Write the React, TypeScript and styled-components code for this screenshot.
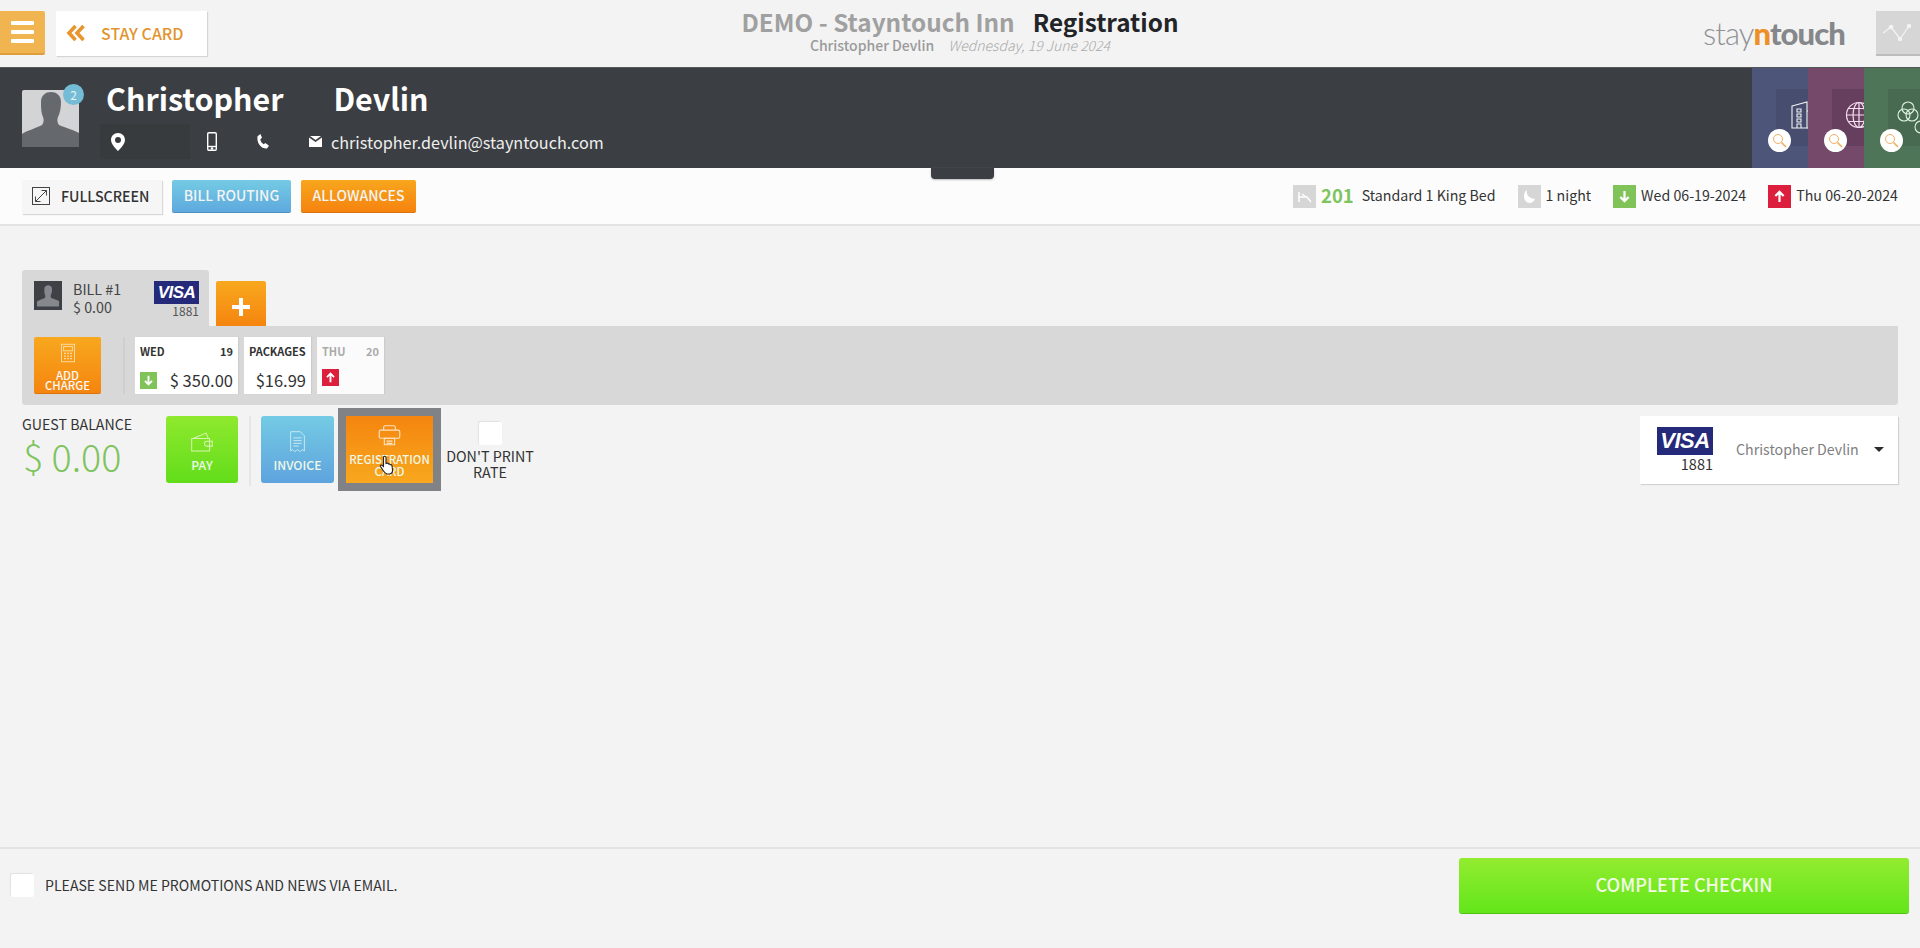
import styled, { createGlobalStyle } from "styled-components";

const GlobalStyle = createGlobalStyle`
  * { box-sizing: border-box; }
  html, body { margin: 0; padding: 0; height: 100%; }
  body {
    background: #f3f3f3;
    font-family: "Noto Sans CJK SC", "Open Sans", sans-serif;
    color: #333;
  }
`;

const Page = styled.div`
  height: 948px;
  display: flex;
  flex-direction: column;
  overflow: hidden;
`;

/* top header */
const Header = styled.header`
  height: 67px;
  flex-shrink: 0;
  display: grid;
  grid-template-columns: 1fr auto 1fr;
  align-items: start;
`;

const HeaderLeft = styled.div`
  display: flex;
  gap: 11px;
  padding-top: 11px;
`;

const MenuButton = styled.button`
  width: 45px;
  height: 44px;
  border: 0;
  padding: 0;
  background: #f0b551;
  border-bottom: 2px solid #dc9e3a;
  border-radius: 0 2px 2px 0;
  display: flex;
  flex-direction: column;
  gap: 5px;
  align-items: center;
  justify-content: center;
`;

const MenuLine = styled.span`
  width: 23px;
  height: 4px;
  background: #fff;
  border-radius: 1px;
`;

const BackButton = styled.button`
  width: 151px;
  height: 45px;
  border: 0;
  padding: 0 0 2px 10px;
  background: #fff;
  box-shadow: 1px 1px 1px #d5d5d5;
  color: #e2942f;
  display: flex;
  align-items: center;
  gap: 15px;
  font: 500 16px "Noto Sans CJK SC", sans-serif;
`;

const TitleBlock = styled.div`
  padding-top: 5px;
  text-align: center;
`;

const TitleRow = styled.div`
  display: flex;
  gap: 18px;
  font-size: 24.3px;
  line-height: 34px;
  font-weight: 700;
`;

const Hotel = styled.span`
  color: #a0a0a0;
`;

const PageName = styled.span`
  color: #222427;
`;

const SubRow = styled.div`
  display: flex;
  justify-content: center;
  gap: 14px;
  font-size: 14px;
  line-height: 14px;
  margin-top: -1px;
`;

const SubName = styled.span`
  color: #9a9a9a;
  font-weight: 500;
`;

const SubDate = styled.span`
  color: #aaa;
  font-style: italic;
  font-weight: 300;
`;

const HeaderRight = styled.div`
  display: flex;
  justify-content: flex-end;
  padding-top: 11px;
  gap: 31px;
`;

const Logo = styled.div`
  font-size: 31px;
  line-height: 44px;
  letter-spacing: -0.9px;
  color: #8f9194;
  font-weight: 300;
  font-family: "Lato", sans-serif;
`;

const LogoBold = styled.b<{ $orange?: boolean }>`
  font-weight: 900;
  color: ${(p) => (p.$orange ? "#ee8f25" : "#85878a")};
`;

const ChartButton = styled.button`
  width: 44px;
  height: 45px;
  border: 0;
  padding: 0 0 0 6px;
  background: #d6d6d6;
  border-bottom: 2px solid #bdbdbd;
  display: flex;
  align-items: center;
`;

/* dark guest bar */
const GuestBar = styled.section`
  height: 101px;
  flex-shrink: 0;
  background: #3b3e42;
  display: flex;
  border-top: 1px solid #55585b;
`;

const GuestInfo = styled.div`
  flex: 1;
  display: flex;
  padding: 22px 0 0 22px;
  gap: 27px;
`;

const AvatarBox = styled.div`
  position: relative;
  width: 57px;
  height: 57px;
  background: #d3d4d6;
  border-radius: 2px;
  overflow: visible;
`;

const Badge = styled.span`
  position: absolute;
  top: -6px;
  right: -5px;
  width: 21px;
  height: 21px;
  border-radius: 50%;
  background: #74bcd5;
  color: #e6f4f8;
  font-size: 12px;
  line-height: 21px;
  text-align: center;
`;

const GuestText = styled.div`
  display: flex;
  flex-direction: column;
  margin-top: -11px;
`;

const GuestName = styled.h1`
  margin: 0;
  display: flex;
  gap: 50px;
  color: #fff;
  font-size: 30.4px;
  line-height: 38px;
  font-weight: 700;
`;

const ContactRow = styled.div`
  display: flex;
  align-items: center;
  margin: 7px 0 0 -6px;
  height: 35px;
`;

const AddressBox = styled.div`
  width: 90px;
  height: 35px;
  background: #383b3e;
  display: flex;
  align-items: center;
  padding-left: 11px;
`;

const ContactIcon = styled.span<{ $width: number; $after?: number }>`
  width: ${(p) => p.$width}px;
  margin-right: ${(p) => p.$after ?? 0}px;
  display: flex;
  justify-content: center;
`;

const Email = styled.span`
  color: #eee;
  font-size: 16.2px;
`;

const Panel = styled.div<{ $bg: string; $inner: string }>`
  position: relative;
  width: 56px;
  background: ${(p) => p.$bg};
  padding: 21px 0 0 24px;
  overflow: hidden;
  & > div {
    background: ${(p) => p.$inner};
  }
`;

const PanelInner = styled.div<{ $left?: number }>`
  width: 60px;
  height: 57px;
  padding: 12px 0 0 ${(p) => p.$left ?? 15}px;
`;

const SearchDot = styled.span`
  position: absolute;
  left: 16px;
  top: 61px;
  width: 23px;
  height: 23px;
  border-radius: 50%;
  background: #fff;
  display: flex;
  align-items: center;
  justify-content: center;
`;

/* actions strip */
const ActionBar = styled.section`
  position: relative;
  height: 58px;
  flex-shrink: 0;
  background: #fcfcfc;
  border-bottom: 2px solid #e4e4e4;
  padding: 12px 22px 0;
  display: flex;
  justify-content: space-between;
`;

const Handle = styled.div`
  position: absolute;
  left: 931px;
  top: 0;
  width: 63px;
  height: 11px;
  background: #3b3e42;
  border-radius: 0 0 4px 4px;
  box-shadow: 0 1px 2px #bbb;
`;

const ActionGroup = styled.div`
  display: flex;
  gap: 10px;
  align-items: flex-start;
`;

const FullscreenButton = styled.button`
  width: 140px;
  height: 34px;
  border: 0;
  padding: 0 0 2px 10px;
  background: #f6f6f6;
  box-shadow: 1px 1px 1px #d8d8d8;
  display: flex;
  align-items: center;
  gap: 11px;
  color: #333;
  font: 500 14.2px "Noto Sans CJK SC", sans-serif;
`;

const PillButton = styled.button<{ $tone: "blue" | "orange" }>`
  height: 33px;
  padding: 0 0 2px;
  width: ${(p) => (p.$tone === "blue" ? 119 : 115)}px;
  border: 0;
  border-radius: 2px;
  color: #f4f4f4;
  font: 500 14px "Noto Sans CJK SC", sans-serif;
  background: ${(p) =>
    p.$tone === "blue"
      ? "linear-gradient(#74cbe4, #5ea9de)"
      : "linear-gradient(#f8a61d, #f5830f)"};
  border-bottom: 1px solid ${(p) => (p.$tone === "blue" ? "#4f90c0" : "#d9730c")};
`;

const StayInfo = styled.div`
  display: flex;
  align-items: flex-start;
  padding: 5px 0 0;
  font-size: 14.2px;
  line-height: 20px;
  color: #333;
`;

const StatIcon = styled.span<{ $bg: string; $gap: number }>`
  width: 23px;
  height: 23px;
  margin-left: ${(p) => p.$gap}px;
  margin-right: 5px;
  background: ${(p) => p.$bg};
  display: flex;
  align-items: center;
  justify-content: center;
`;

const RoomNumber = styled.span`
  color: #7ec45e;
  font-size: 18.500px;
  font-weight: 700;
  margin-right: 8px;
`;

/* bill area */
const Main = styled.main`
  flex: 1;
  padding: 44px 22px 0;
`;

const TabRow = styled.div`
  display: flex;
  align-items: flex-end;
  gap: 7px;
`;

const BillTab = styled.div`
  width: 187px;
  height: 56px;
  background: #d8d8d8;
  border-radius: 3px 3px 0 0;
  padding: 11px 10px 0 12px;
  display: flex;
`;

const ThumbBox = styled.div`
  width: 28px;
  height: 29px;
  background: #3e4145;
  padding: 3px;
  margin-right: 11px;
`;

const BillText = styled.div`
  flex: 1;
  font-size: 14.3px;
  line-height: 18px;
  margin-top: -1px;
  color: #444;
`;

const CardMark = styled.div<{ $large?: boolean }>`
  width: ${(p) => (p.$large ? 56 : 45)}px;
  flex-shrink: 0;
  text-align: right;
  font-size: ${(p) => (p.$large ? 14.5 : 12)}px;
  line-height: ${(p) => (p.$large ? 18 : 14)}px;
  color: ${(p) => (p.$large ? "#333" : "#555")};
`;

const VisaLabel = styled.div<{ $large?: boolean }>`
  height: ${(p) => (p.$large ? 28 : 23)}px;
  background: #25297a;
  color: #fff;
  text-align: center;
  font-family: "Liberation Sans", sans-serif;
  font-style: italic;
  font-weight: 700;
  font-size: ${(p) => (p.$large ? 22 : 17)}px;
  line-height: ${(p) => (p.$large ? 28 : 23)}px;
  letter-spacing: -0.5px;
`;

const AddTabButton = styled.button`
  width: 50px;
  height: 45px;
  border: 0;
  padding: 7px 0 0;
  background: linear-gradient(#f8a81e, #f5850f);
  border-radius: 2px 2px 0 0;
  color: #fff;
  display: flex;
  align-items: center;
  justify-content: center;
`;

const ChargeBar = styled.div`
  height: 79px;
  background: #d8d8d8;
  border-radius: 0 0 3px 3px;
  padding: 11px 12px 0;
  display: flex;
  gap: 6px;
`;

const AddChargeButton = styled.button`
  width: 67px;
  height: 57px;
  border: 0;
  padding: 6px 0 0;
  border-radius: 2px;
  background: linear-gradient(#f8a81e, #f5850f);
  border-bottom: 1px solid #d9730c;
  color: #f8f8f8;
  font: 500 11.4px/10px "Noto Sans CJK SC", sans-serif;
  display: flex;
  flex-direction: column;
  align-items: center;
  gap: 7px;
`;

const VDivider = styled.div<{ $margin: string; $height: number; $color: string }>`
  width: 2px;
  height: ${(p) => p.$height}px;
  background: ${(p) => p.$color};
  margin: ${(p) => p.$margin};
`;

const DayCard = styled.div<{ $width: number; $muted?: boolean }>`
  width: ${(p) => p.$width}px;
  height: 57px;
  background: ${(p) => (p.$muted ? "#fbfbfb" : "#fff")};
  box-shadow: 1px 0 1px #ccc;
  padding: 5px 5px 0;
  color: ${(p) => (p.$muted ? "#aaa" : "#333")};
`;

const DayTop = styled.div`
  display: flex;
  justify-content: space-between;
  font-size: 11px;
  line-height: 18px;
  font-weight: 700;
`;

const DayBottom = styled.div`
  margin-top: 9px;
  display: flex;
  justify-content: space-between;
  align-items: center;
  font-size: 16.500px;
  line-height: 22px;
  color: #333;
`;

const MiniArrow = styled.span<{ $bg: string }>`
  width: 17px;
  height: 17px;
  background: ${(p) => p.$bg};
  display: flex;
  align-items: center;
  justify-content: center;
`;

const BalanceRow = styled.div`
  margin-top: 11px;
  display: flex;
  align-items: flex-start;
`;

const BalanceBlock = styled.div`
  width: 144px;
`;

const BalanceLabel = styled.div`
  font-size: 14.2px;
  line-height: 20px;
  margin-top: -2px;
  color: #333;
`;

const BalanceValue = styled.div`
  font-size: 37.700px;
  line-height: 44px;
  font-weight: 300;
  color: #7ec45e;
  margin-left: 1px;
`;

const Tile = styled.button<{
  $tone: "green" | "blue" | "orange";
  $width: number;
  $pad: number;
  $left?: number;
  $active?: boolean;
}>`
  position: relative;
  width: ${(p) => p.$width}px;
  height: 67px;
  margin-left: ${(p) => p.$left ?? 0}px;
  border: 0;
  padding: ${(p) => p.$pad}px 0 0;
  border-radius: ${(p) => (p.$active ? 0 : 3)}px;
  color: #eef8e8;
  font: 500 ${(p) => (p.$active ? 11.4 : 12.2)}px/12px "Noto Sans CJK SC", sans-serif;
  display: flex;
  flex-direction: column;
  align-items: center;
  gap: 6px;
  background: ${(p) =>
    p.$tone === "green"
      ? "linear-gradient(#8fe92e, #62dd1a)"
      : p.$tone === "blue"
        ? "linear-gradient(#74cbe4, #5ea3de)"
        : "linear-gradient(#f5850f, #f8a81e)"};
  outline: ${(p) => (p.$active ? "8px solid #808285" : "none")};
`;

const Cursor = styled.span`
  position: absolute;
  left: 33px;
  top: 39px;
  width: 16px;
  height: 20px;
`;

const PrintOption = styled.label`
  width: 100px;
  margin-left: 7px;
  padding-top: 6px;
  display: flex;
  flex-direction: column;
  align-items: center;
  font-size: 14.3px;
  line-height: 16px;
  text-align: center;
  color: #333;
`;

const CheckBox = styled.span`
  display: block;
  flex-shrink: 0;
  width: 23px;
  height: 23px;
  background: #fff;
  border-radius: 2px;
  box-shadow: -1px -1px 1px #e2e2e2;
`;

const PrintBox = styled(CheckBox)`
  margin-bottom: 3px;
`;

const CardSelect = styled.div`
  margin-left: auto;
  width: 258px;
  height: 68px;
  background: #fff;
  box-shadow: 1px 1px 1px #d2d2d2;
  padding: 11px 0 0 17px;
  display: flex;
  gap: 15px;
`;

const CardOwner = styled.span`
  margin-left: 8px;
  font-size: 14.2px;
  line-height: 44px;
  white-space: nowrap;
  color: #808080;
`;

const Caret = styled.span`
  margin-top: 20px;
  width: 0;
  height: 0;
  border-left: 5px solid transparent;
  border-right: 5px solid transparent;
  border-top: 5px solid #2c2c2c;
`;

/* footer */
const Footer = styled.footer`
  height: 101px;
  flex-shrink: 0;
  border-top: 2px solid #e2e2e2;
  padding: 9px 11px 0 11px;
  display: flex;
  align-items: flex-start;
  justify-content: space-between;
`;

const PromoLabel = styled.label`
  display: flex;
  align-items: center;
  gap: 11px;
  height: 54px;
  font-size: 14.1px;
  color: #333;
`;

const CompleteButton = styled.button`
  width: 450px;
  height: 56px;
  border: 0;
  padding: 0 0 3px;
  border-radius: 3px;
  background: linear-gradient(#93ec2f, #62e61a);
  border-bottom: 1px solid #52c012;
  color: #f2fbe8;
  font: 500 18.100px "Noto Sans CJK SC", sans-serif;
`;

const Silhouette = ({ fill }: { fill: string }) => (
  <svg width="100%" height="100%" viewBox="0 0 57 57">
    <path
      fill={fill}
      d="M19 12c0-7 5-10 10-10s10 3 10 10c0 6-1 11-3 15-1 3-1 5 1 8 4 2 12 4 20 8v14H0V44c6-4 15-6 20-9 2-3 2-5 1-8-2-4-2-9-2-15z"
    />
  </svg>
);

const ArrowIcon = ({ up, size = 13 }: { up?: boolean; size?: number }) => (
  <svg width={size} height={size} viewBox="0 0 14 14" fill="none" stroke="#fff" strokeWidth="2.4">
    {up ? <path d="M7 13V2M2.5 6.5 7 2l4.5 4.5" /> : <path d="M7 1v11M2.5 7.5 7 12l4.5-4.5" />}
  </svg>
);

const Magnifier = () => (
  <svg width="15" height="15" viewBox="0 0 15 15" fill="none" stroke="#efae62" strokeWidth="1">
    <circle cx="6" cy="6" r="4.5" />
    <path d="M9.5 9.5 14 14" strokeWidth="1.700" />
  </svg>
);

export default function App() {
  return (
    <Page>
      <GlobalStyle />
      <Header>
        <HeaderLeft>
          <MenuButton aria-label="menu">
            <MenuLine />
            <MenuLine />
            <MenuLine />
          </MenuButton>
          <BackButton>
            <svg width="20" height="18" viewBox="0 0 20 18" fill="none" stroke="#e8952c" strokeWidth="3.6">
              <path d="M9.5 2 3 9l6.500 7M17.500 2 11 9l6.500 7" />
            </svg>
            STAY CARD
          </BackButton>
        </HeaderLeft>
        <TitleBlock>
          <TitleRow>
            <Hotel>DEMO - Stayntouch Inn</Hotel>
            <PageName>Registration</PageName>
          </TitleRow>
          <SubRow>
            <SubName>Christopher Devlin</SubName>
            <SubDate>Wednesday, 19 June 2024</SubDate>
          </SubRow>
        </TitleBlock>
        <HeaderRight>
          <Logo>
            stay<LogoBold $orange>n</LogoBold>
            <LogoBold>touch</LogoBold>
          </Logo>
          <ChartButton aria-label="activity">
            <svg width="38" height="20" viewBox="0 0 38 20" fill="none" stroke="#f3f3f3" strokeWidth="1.3">
              <path d="M1 10 9 4l9 12 9-13" />
              <circle cx="9" cy="4" r="1.6" fill="#f3f3f3" />
              <circle cx="18" cy="16" r="1.6" fill="#f3f3f3" />
              <circle cx="27" cy="3" r="1.6" fill="#f3f3f3" />
            </svg>
          </ChartButton>
        </HeaderRight>
      </Header>

      <GuestBar>
        <GuestInfo>
          <AvatarBox>
            <Silhouette fill="#65696e" />
            <Badge>2</Badge>
          </AvatarBox>
          <GuestText>
            <GuestName>
              <span>Christopher</span>
              <span>Devlin</span>
            </GuestName>
            <ContactRow>
              <AddressBox>
                <svg width="14" height="18" viewBox="0 0 14 18">
                  <path
                    fillRule="evenodd"
                    fill="#fff"
                    d="M7 0c4 0 7 3 7 6.800C14 11 9.500 15.500 7 18 4.500 15.500 0 11 0 6.800 0 3 3 0 7 0zm0 4a3 3 0 1 0 0 6 3 3 0 0 0 0-6z"
                  />
                </svg>
              </AddressBox>
              <ContactIcon $width={43}>
                <svg width="10" height="19" viewBox="0 0 10 19" fill="none" stroke="#fff" strokeWidth="1.4">
                  <rect x="0.7" y="0.7" width="8.600" height="17.600" rx="1.200" />
                  <path d="M1 14.500h8" />
                  <circle cx="5" cy="16.500" r="0.600" fill="#fff" />
                </svg>
              </ContactIcon>
              <ContactIcon $width={59} $after={7}>
                <svg width="13" height="15" viewBox="0 0 13 15">
                  <path
                    fill="#fff"
                    d="M4.500 0 6 3.800 4.300 5.200c.3 2.200 1.500 4 3.400 5l1.700-1.200L13 11.800 11 14.500C5.500 15 .5 9.500 1.500 2.200z"
                  />
                </svg>
              </ContactIcon>
              <ContactIcon $width={32}>
                <svg width="13" height="11" viewBox="0 0 13 11">
                  <path fill="#fff" d="M0 1.500 6.500 6 13 1.500V11H0zM1 0h11L6.500 4z" />
                </svg>
              </ContactIcon>
              <Email>christopher.devlin@stayntouch.com</Email>
            </ContactRow>
          </GuestText>
        </GuestInfo>

        <Panel $bg="#4d5578" $inner="#474d6e">
          <PanelInner>
            <svg width="40" height="28" viewBox="0 0 40 28" fill="none" stroke="#f2f2f2" strokeWidth="1.100">
              <path d="M1 5 16 1v26H1z" />
              <path d="M6 8h4v3H6zM6 13h4v3H6zM6 18h4v3H6zM6 27v-4h4v4M16 10h14v17H16" />
            </svg>
          </PanelInner>
          <SearchDot>
            <Magnifier />
          </SearchDot>
        </Panel>
        <Panel $bg="#74496a" $inner="#663f5f">
          <PanelInner $left={13}>
            <svg width="28" height="28" viewBox="0 0 28 28" fill="none" stroke="#f5dff0" strokeWidth="1.200">
              <circle cx="14" cy="14" r="12.500" />
              <ellipse cx="14" cy="14" rx="6" ry="12.500" />
              <path d="M14 1.500v25M1.500 14h25M3.500 7.500h21M3.500 20.500h21" />
            </svg>
          </PanelInner>
          <SearchDot>
            <Magnifier />
          </SearchDot>
        </Panel>
        <Panel $bg="#4f7558" $inner="#486a50">
          <PanelInner $left={9}>
            <svg width="36" height="34" viewBox="0 0 36 34" fill="none" stroke="#dff2e3" strokeWidth="1.100">
              <circle cx="11" cy="7" r="6" />
              <circle cx="7" cy="14" r="6" />
              <circle cx="15" cy="14" r="6" />
              <circle cx="24" cy="26" r="6" />
            </svg>
          </PanelInner>
          <SearchDot>
            <Magnifier />
          </SearchDot>
        </Panel>
      </GuestBar>

      <ActionBar>
        <Handle />
        <ActionGroup>
          <FullscreenButton>
            <svg width="18" height="18" viewBox="0 0 18 18" fill="none" stroke="#444" strokeWidth="1">
              <rect x="0.500" y="0.500" width="17" height="17" />
              <path d="M3.500 14.500l11-11M9.500 3.500h5v5M3.500 9.500v5h5" />
            </svg>
            FULLSCREEN
          </FullscreenButton>
          <PillButton $tone="blue">BILL ROUTING</PillButton>
          <PillButton $tone="orange">ALLOWANCES</PillButton>
        </ActionGroup>
        <StayInfo>
          <StatIcon $bg="#d6d6d6" $gap={0}>
            <svg width="14" height="12" viewBox="0 0 14 12" fill="none" stroke="#fff" strokeWidth="1.500">
              <path d="M1 1v10M1 6l8 0 4 5M4 3l4 3" />
            </svg>
          </StatIcon>
          <RoomNumber>201</RoomNumber>
          Standard 1 King Bed
          <StatIcon $bg="#d6d6d6" $gap={22}>
            <svg width="11" height="13" viewBox="0 0 11 13">
              <path fill="#fff" d="M3 0c-1 4 1 8 8 9-1 2-3 4-5 4-4 0-6-3-6-6.500C0 3.500 1 1 3 0z" />
            </svg>
          </StatIcon>
          1 night
          <StatIcon $bg="#7fc359" $gap={22}>
            <ArrowIcon />
          </StatIcon>
          Wed 06-19-2024
          <StatIcon $bg="#db1f3d" $gap={22}>
            <ArrowIcon up />
          </StatIcon>
          Thu 06-20-2024
        </StayInfo>
      </ActionBar>

      <Main>
        <TabRow>
          <BillTab>
            <ThumbBox>
              <Silhouette fill="#85888c" />
            </ThumbBox>
            <BillText>
              BILL #1
              <br />$ 0.00
            </BillText>
            <CardMark>
              <VisaLabel>VISA</VisaLabel>
              1881
            </CardMark>
          </BillTab>
          <AddTabButton aria-label="add bill">
            <svg width="18" height="18" viewBox="0 0 18 18">
              <path fill="#fff" d="M7 0h4v7h7v4h-7v7H7v-7H0V7h7z" />
            </svg>
          </AddTabButton>
        </TabRow>
        <ChargeBar>
          <AddChargeButton>
            <svg width="14" height="20" viewBox="0 0 16 21" fill="none" stroke="#fbe0b4" strokeWidth="1">
              <rect x="0.500" y="0.500" width="15" height="20" />
              <rect x="3" y="3" width="10" height="5" />
              <path d="M3.500 11h2M7 11h2M10.500 11h2M3.500 14h2M7 14h2M10.500 14h2M3.500 17h2M7 17h2M10.500 17h2" strokeWidth="1.400" />
            </svg>
            <span>
              ADD
              <br />
              CHARGE
            </span>
          </AddChargeButton>
          <VDivider $margin="0 4px 0 16px" $height={57} $color="#cfcfcf" />
          <DayCard $width={103}>
            <DayTop>
              <span>WED</span>
              <span>19</span>
            </DayTop>
            <DayBottom>
              <MiniArrow $bg="#7fc359">
                <ArrowIcon size={11} />
              </MiniArrow>
              $ 350.00
            </DayBottom>
          </DayCard>
          <DayCard $width={67}>
            <DayTop>
              <span>PACKAGES</span>
            </DayTop>
            <DayBottom>
              <span />
              $16.99
            </DayBottom>
          </DayCard>
          <DayCard $width={67} $muted>
            <DayTop>
              <span>THU</span>
              <span>20</span>
            </DayTop>
            <DayBottom>
              <MiniArrow $bg="#db1f3d">
                <ArrowIcon up size={11} />
              </MiniArrow>
            </DayBottom>
          </DayCard>
        </ChargeBar>

        <BalanceRow>
          <BalanceBlock>
            <BalanceLabel>GUEST BALANCE</BalanceLabel>
            <BalanceValue>$ 0.00</BalanceValue>
          </BalanceBlock>
          <Tile $tone="green" $width={72} $pad={15}>
            <svg width="26" height="22" viewBox="0 0 36 32" fill="none" stroke="#d8f5b0" strokeWidth="1.500">
              <path d="M5 11 24 3l3 7M3 11h26v18H3zM33 15H25a3 3 0 0 0 0 7h8z" />
            </svg>
            PAY
          </Tile>
          <VDivider $margin="0 10px 0 11px" $height={70} $color="#e6e6e6" />
          <Tile $tone="blue" $width={73} $pad={15}>
            <svg width="19" height="22" viewBox="0 0 24 32" fill="none" stroke="#c8e9f5" strokeWidth="1.400">
              <path d="M2 1h14l6 6v22l-3-2-3 3-4-3-4 3-3-3-3 2zM6 10h12M6 14h12M6 18h12M6 22h8" />
            </svg>
            INVOICE
          </Tile>
          <Tile $tone="orange" $width={87} $pad={9} $left={12} $active>
            <svg width="23" height="22" viewBox="0 0 30 30" fill="none" stroke="#fbe3c4" strokeWidth="1.500">
              <path d="M7 7V3a2 2 0 0 1 2-2h12a2 2 0 0 1 2 2v4" />
              <rect x="1" y="7" width="28" height="11" rx="2" />
              <path d="M8 18h14v9H8zM11 22h8M11 25h8" />
            </svg>
            <span>
              REGISTRATION
              <br />
              CARD
            </span>
            <Cursor>
              <svg width="16" height="20" viewBox="0 0 16 20">
                <path
                  fill="#fff"
                  stroke="#222"
                  strokeWidth="1.100"
                  d="M5 1.500c1-.7 2 0 2 1v6l1-.3c.8-.2 1.400.3 1.500.8.800-.4 1.500 0 1.700.7.800-.3 1.700.2 1.800 1l.5 4c.2 2-1 4-3 4.300H8C6.500 18.500 5.500 17.500 4.500 16L1.500 11.500c-.5-1 .7-2 1.700-1.200L4.500 11.500V2.500c0-.4.200-.8.500-1z"
                />
              </svg>
            </Cursor>
          </Tile>
          <PrintOption>
            <PrintBox />
            DON'T PRINT
            <br />
            RATE
          </PrintOption>
          <CardSelect>
            <CardMark $large>
              <VisaLabel $large>VISA</VisaLabel>
              1881
            </CardMark>
            <CardOwner>Christopher Devlin</CardOwner>
            <Caret />
          </CardSelect>
        </BalanceRow>
      </Main>

      <Footer>
        <PromoLabel>
          <CheckBox />
          PLEASE SEND ME PROMOTIONS AND NEWS VIA EMAIL.
        </PromoLabel>
        <CompleteButton>COMPLETE CHECKIN</CompleteButton>
      </Footer>
    </Page>
  );
}
